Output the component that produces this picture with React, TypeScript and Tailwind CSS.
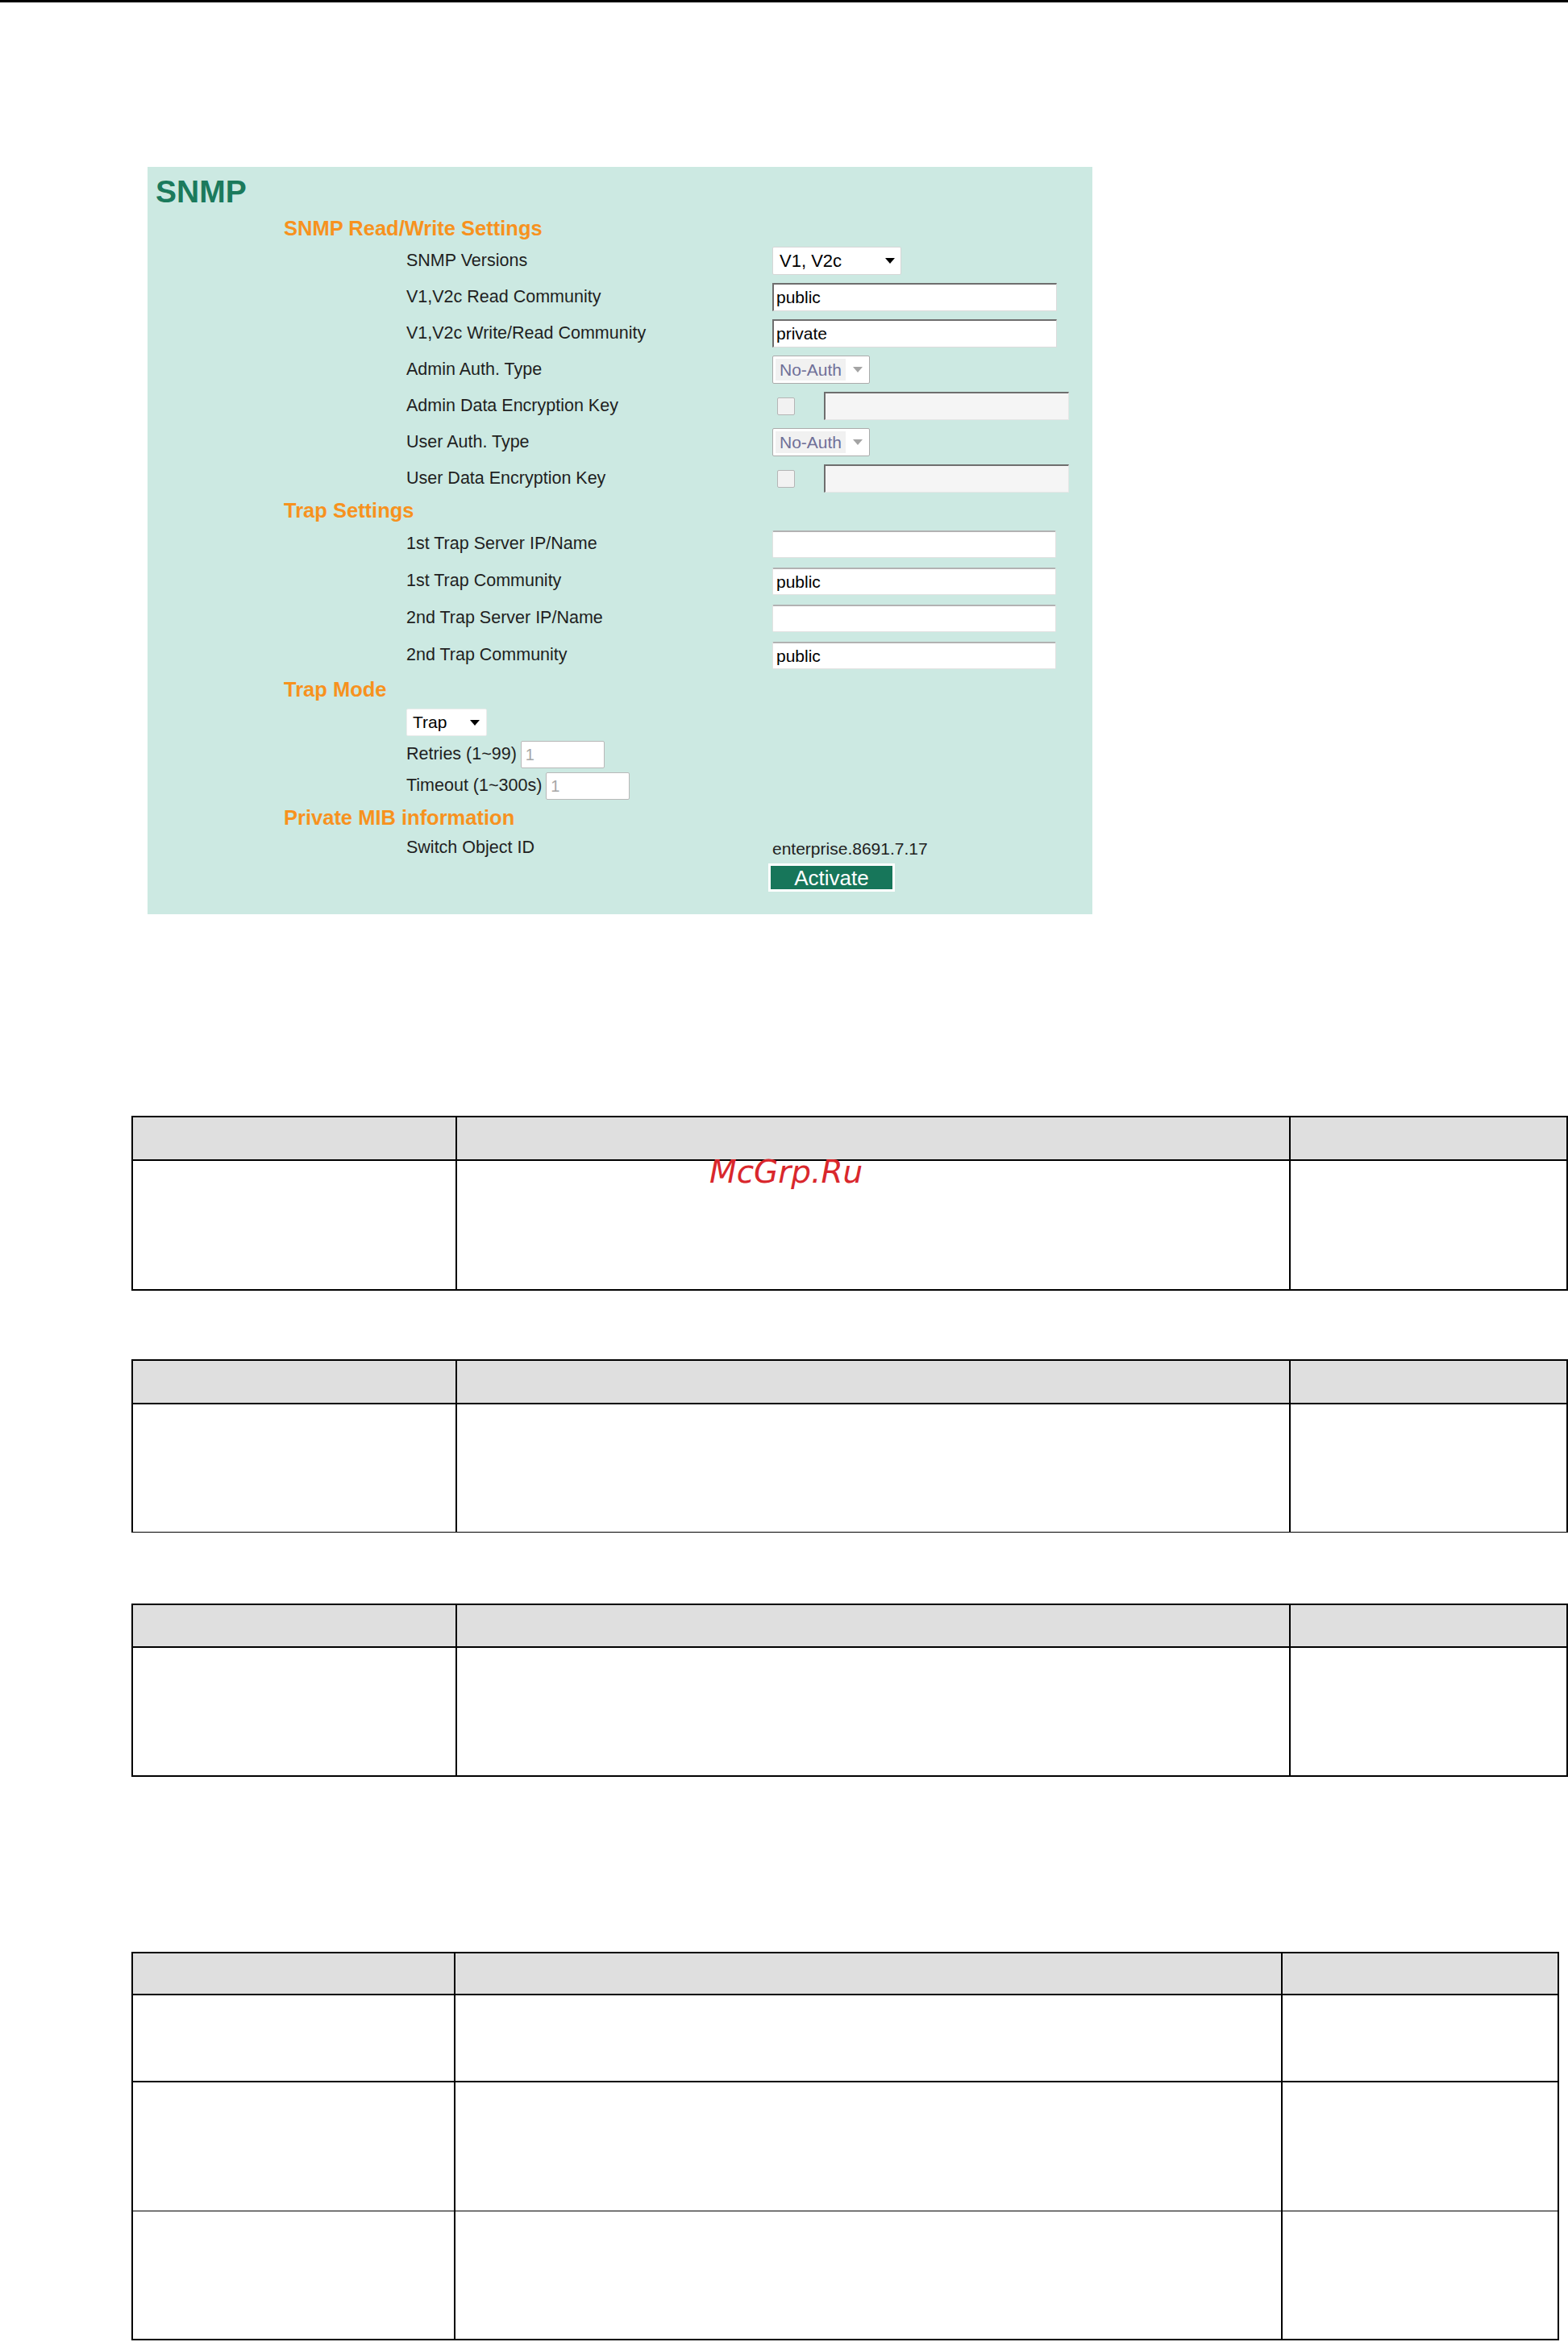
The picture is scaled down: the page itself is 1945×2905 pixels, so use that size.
import type { ReactNode } from 'react';

// Small down-pointing arrow used by the select boxes
const Arrow = ({ color = '#000' }: { color?: string }) => (
  <svg width="12" height="7" viewBox="0 0 12 7">
    <path d="M0 0h12L6 7z" fill={color} />
  </svg>
);

const Heading = ({ h, children }: { h: string; children: ReactNode }) => (
  <div className={`${h} flex items-center pl-[169px] text-[25.5px] font-bold text-[#f7921e] leading-none`}>
    {children}
  </div>
);

const Field = ({ h, label, children }: { h: string; label: string; children?: ReactNode }) => (
  <div className={`${h} flex items-center`}>
    <div className="w-[775px] shrink-0 pl-[321px] text-[21.5px] leading-none text-[#1f1f1f]">{label}</div>
    {children}
  </div>
);

// Old style text box with an inset border
const InsetInput = ({ value }: { value: string }) => (
  <div className="w-[353px] h-[35px] bg-white border-t-2 border-l-2 border-r border-b border-t-[#6e6e6e] border-l-[#6e6e6e] border-r-[#dcdcdc] border-b-[#dcdcdc] flex items-center pl-[3px] text-[21px] text-black">
    {value}
  </div>
);

const FlatInput = ({ value }: { value?: string }) => (
  <div className="w-[352px] h-[34px] bg-white rounded-[2px] border border-[#e2e2e2] border-t-2 border-t-[#b2b2b2] flex items-center pl-[4px] text-[21px] text-black">
    {value}
  </div>
);

const DisabledSelect = () => (
  <div className="w-[121px] h-[35px] bg-white border border-[#ababab] rounded-[2px] flex items-center pl-[3px] pr-[8px]">
    <span className="h-[27px] bg-[#f1f1f1] px-[5px] flex items-center text-[21px] text-[#6f6f98]">No-Auth</span>
    <span className="ml-auto flex">
      <Arrow color="#a4a4a4" />
    </span>
  </div>
);

const KeyField = () => (
  <div className="flex items-center">
    <div className="ml-[6px] w-[22px] h-[22px] border border-[#b5b5b5] bg-[#f2f2f2] rounded-[2px]" />
    <div className="ml-[36px] w-[304px] h-[35px] bg-[#f5f5f5] border-t-2 border-l-2 border-r border-b border-t-[#6e6e6e] border-l-[#6e6e6e] border-r-[#e6e6e6] border-b-[#e6e6e6]" />
  </div>
);

const SmallInput = () => (
  <div className="w-[104px] h-[34px] bg-white border border-[#b8b8b8] rounded-[2px] flex items-center pl-[5px] text-[20px] text-[#a6a6a6]">
    1
  </div>
);

const Cells = ({ cols }: { cols: string[] }) => (
  <>
    {cols.map((c, i) => (
      <div key={i} className={`${c} h-full border-r-2 border-black`} />
    ))}
  </>
);

type RowSpec = { h: string; bottom: string };

const DocTable = ({
  width,
  cols,
  header,
  rows,
}: {
  width: string;
  cols: string[];
  header: string;
  rows: RowSpec[];
}) => (
  <div className={`ml-[163px] ${width} border-l-2 border-t-2 border-black`}>
    <div className={`flex ${header} bg-[#dfdfdf] border-b-2 border-black`}>
      <Cells cols={cols} />
    </div>
    {rows.map((r, i) => (
      <div key={i} className={`flex ${r.h} ${r.bottom} border-black`}>
        <Cells cols={cols} />
      </div>
    ))}
  </div>
);

const wideCols = ['w-[402px]', 'w-[1034px]', 'w-[344px]'];
const lastCols = ['w-[400px]', 'w-[1026px]', 'w-[343px]'];

export default function App() {
  return (
    <div className="relative w-[1945px] h-[2905px] overflow-hidden bg-white font-['Liberation_Sans',Arial,sans-serif]">
      <div className="h-[3px] bg-black" />

      {/* SNMP settings panel */}
      <div className="mt-[204px] ml-[183px] w-[1172px] h-[927px] bg-[#cce9e2] flex flex-col">
        <div className="h-[60px] flex items-center pl-[10px]">
          <h1 className="text-[39px] font-bold leading-none text-[#1b7a5c]">SNMP</h1>
        </div>
        <Heading h="h-[34px]">SNMP Read/Write Settings</Heading>

        <Field h="h-[45px]" label="SNMP Versions">
          <div className="w-[160px] h-[35px] bg-white border border-[#d6d6d6] rounded-[2px] flex items-center justify-between pl-[8px] pr-[7px] text-[22px] text-black">
            V1, V2c
            <Arrow />
          </div>
        </Field>
        <Field h="h-[45px]" label="V1,V2c Read Community">
          <InsetInput value="public" />
        </Field>
        <Field h="h-[45px]" label="V1,V2c Write/Read Community">
          <InsetInput value="private" />
        </Field>
        <Field h="h-[45px]" label="Admin Auth. Type">
          <DisabledSelect />
        </Field>
        <Field h="h-[45px]" label="Admin Data Encryption Key">
          <KeyField />
        </Field>
        <Field h="h-[45px]" label="User Auth. Type">
          <DisabledSelect />
        </Field>
        <Field h="h-[45px]" label="User Data Encryption Key">
          <KeyField />
        </Field>

        <Heading h="h-[36px]">Trap Settings</Heading>
        <Field h="h-[46px]" label="1st Trap Server IP/Name">
          <FlatInput />
        </Field>
        <Field h="h-[46px]" label="1st Trap Community">
          <FlatInput value="public" />
        </Field>
        <Field h="h-[46px]" label="2nd Trap Server IP/Name">
          <FlatInput />
        </Field>
        <Field h="h-[46px]" label="2nd Trap Community">
          <FlatInput value="public" />
        </Field>

        <Heading h="h-[40px]">Trap Mode</Heading>
        <div className="h-[40px] flex items-center pl-[321px]">
          <div className="w-[100px] h-[34px] bg-white border border-[#ececec] rounded-[2px] flex items-center justify-between pl-[7px] pr-[8px] text-[21px] text-black">
            Trap
            <Arrow />
          </div>
        </div>
        <div className="h-[39px] flex items-center gap-[5px] pl-[321px] text-[21.5px] text-[#1f1f1f]">
          <span>Retries (1~99)</span>
          <SmallInput />
        </div>
        <div className="h-[39px] flex items-center gap-[5px] pl-[321px] text-[21.5px] text-[#1f1f1f]">
          <span>Timeout (1~300s)</span>
          <SmallInput />
        </div>

        <Heading h="h-[42px]">Private MIB information</Heading>
        <Field h="h-[32px]" label="Switch Object ID">
          <span className="text-[21px] leading-none text-[#1f1f1f]">enterprise.8691.7.17</span>
        </Field>
        <div className="h-[41px] flex items-center pl-[770px]">
          <button className="w-[157px] h-[35px] border-[3px] border-white bg-[#17765a] text-white text-[26px] leading-none flex items-center justify-center">
            Activate
          </button>
        </div>
      </div>

      {/* Description tables */}
      <div className="mt-[250px]">
        <DocTable
          width="w-[1782px]"
          cols={wideCols}
          header="h-[54px]"
          rows={[{ h: 'h-[161px]', bottom: 'border-b-2' }]}
        />
      </div>
      <div className="mt-[85px]">
        <DocTable
          width="w-[1782px]"
          cols={wideCols}
          header="h-[54px]"
          rows={[{ h: 'h-[159px]', bottom: 'border-b' }]}
        />
      </div>
      <div className="mt-[88px]">
        <DocTable
          width="w-[1782px]"
          cols={wideCols}
          header="h-[53px]"
          rows={[{ h: 'h-[160px]', bottom: 'border-b-2' }]}
        />
      </div>
      <div className="mt-[217px]">
        <DocTable
          width="w-[1771px]"
          cols={lastCols}
          header="h-[52px]"
          rows={[
            { h: 'h-[108px]', bottom: 'border-b-2' },
            { h: 'h-[160px]', bottom: 'border-b' },
            { h: 'h-[160px]', bottom: 'border-b-2' },
          ]}
        />
      </div>

      {/* watermark stamped over the first table */}
      <div className="absolute left-[880px] top-[1434px] text-[39px] leading-none italic text-[#d9272c] font-['DejaVu_Sans',sans-serif]">
        McGrp.Ru
      </div>
    </div>
  );
}
